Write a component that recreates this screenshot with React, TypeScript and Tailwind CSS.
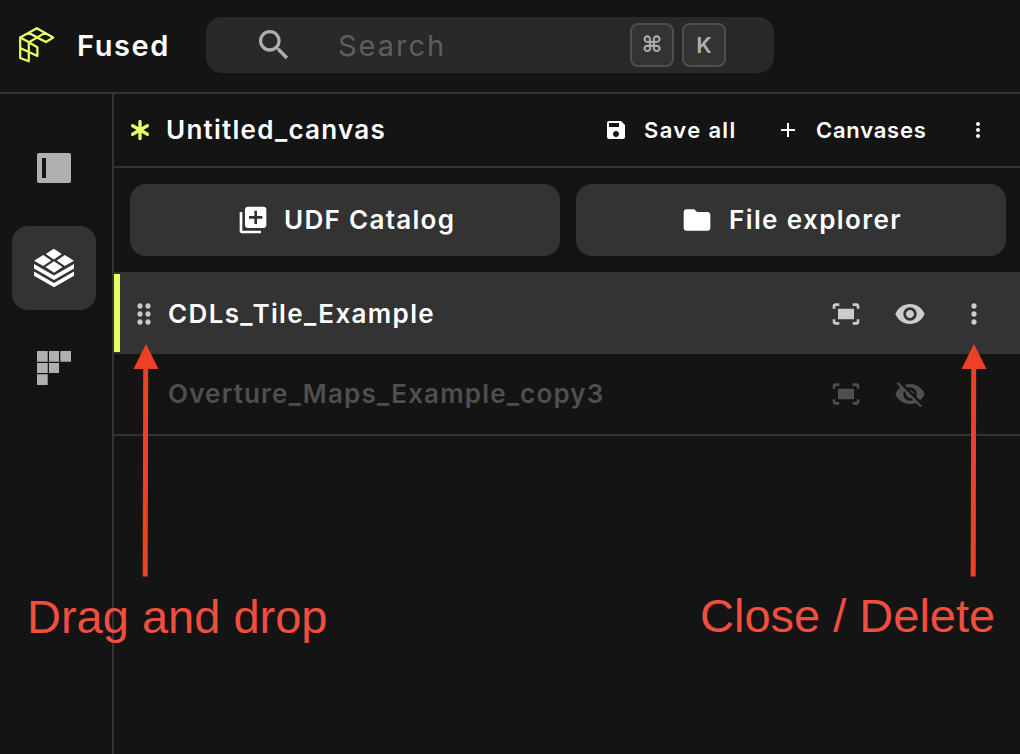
import React from "react";
import { MdSearch, MdSave, MdAdd, MdMoreVert, MdDragIndicator, MdVisibility, MdVisibilityOff, MdFitScreen, MdLibraryAdd, MdFolder } from "react-icons/md";

function Logo() {
  return (
    <svg width="38" height="36" viewBox="18 27 38 36" fill="none" stroke="#e8ff66" strokeWidth="2.2" strokeLinejoin="round" strokeLinecap="round">
      <path d="M20.200 37.500 36.800 28.200 53.200 37.500 46 42 28.500 32.800M20.200 37.500 29 42.300 45 32.900M36.800 37.500 46 42" />
      <path d="M20.200 37.500V58L28.800 61.300V42.300L37.400 47.200V56L20.200 48" />
    </svg>
  );
}

function Layers() {
  return (
    <svg width="42" height="40" viewBox="33 248 42 40" fill="#fff">
      <path d="M53.800 248.800 61.800 254 53.800 259.400 45.800 254ZM43.200 255 51.200 260.400 43.200 266 34 260.800ZM64.800 255 74 260.800 64.800 266 56.800 260.400ZM54 261.300 62.500 267 54 272.800 45.500 267Z" />
      <path d="M34 264 54 275.500 74 264V268.500L54 280 34 268.500ZM34 271.500 54 283 74 271.500V275.800L54 287.200 34 275.800Z" />
    </svg>
  );
}

function Arrow() {
  return (
    <svg width="26" height="234" viewBox="0 0 26 234" fill="#ed4127">
      <path d="M13 0 25.500 25H15.200L14.700 232.500H9.700L10.200 25H.500Z" />
    </svg>
  );
}

export default function App() {
  return (
    <div className="relative flex h-[754px] w-[1020px] flex-col overflow-hidden bg-[#141414] font-['Inter',sans-serif] text-white">
      <header className="flex h-[94px] shrink-0 items-start border-b-2 border-[#333]">
        <div className="flex h-[90px] w-[206px] items-center pl-[18px]">
          <Logo />
          <span className="ml-[21px] text-[29px] font-semibold leading-none tracking-[1.6px]">Fused</span>
        </div>
        <div className="mt-[17px] flex h-14 w-[568px] items-center rounded-2xl bg-[#292929] pl-12">
          <MdSearch size={40} className="text-[#afafaf]" />
          <span className="ml-[44px] flex-1 text-[29px] leading-none tracking-[2px] text-[#5e5e5e]">Search</span>
          <div className="mr-12 flex gap-2 text-[#afafaf]">
            <kbd className="flex size-11 items-center justify-center rounded-lg border-2 border-[#4f4f4f] bg-[#333] font-['DejaVu_Sans',sans-serif] text-[22px] font-bold leading-none">⌘</kbd>
            <kbd className="flex size-11 items-center justify-center rounded-lg border-2 border-[#4f4f4f] bg-[#333] font-['Inter',sans-serif] text-[22px] font-semibold leading-none">K</kbd>
          </div>
        </div>
      </header>
      <div className="flex min-h-0 flex-1">
        <nav className="flex w-[114px] shrink-0 flex-col items-center border-r-2 border-[#333] pr-1 pt-[58px]">
          <svg width="34" height="32" viewBox="0 0 34 32">
            <rect y="1" width="34" height="30" rx="2" fill="#b0b0b0" />
            <path d="M5 6h4v20H5z" fill="#141414" />
          </svg>
          <div className="mt-[42px] flex size-[84px] items-center justify-center rounded-2xl bg-[#333]">
            <Layers />
          </div>
          <svg className="mt-[41px]" width="34" height="34" viewBox="0 0 34 34" fill="#b0b0b0">
            <path d="M0 0h10.700v10.700H0zM12 0h10v10.700H12zM23.300 0H34v10.700H23.300zM0 12h10.700v10H0zM12 12h10v10H12zM0 23.300h10.700V34H0z" />
          </svg>
        </nav>
        <main className="min-w-0 flex-1">
          <div className="flex h-[74px] items-center border-b-2 border-[#333] pl-4">
            <svg width="20" height="22" viewBox="0 0 20 22" stroke="#e8ff66" strokeWidth="3.3" strokeLinecap="round">
              <path d="M10 2.500v17M2.600 6.700l14.800 8.600M2.600 15.300 17.400 6.700" />
            </svg>
            <span className="ml-4 text-[26px] font-semibold leading-none tracking-[1.25px]">Untitled_canvas</span>
            <div className="ml-auto flex items-center text-[22px] font-semibold leading-none">
              <MdSave size={24} />
              <span className="ml-4 w-[132px] tracking-[1.35px]">Save all</span>
              <MdAdd size={24} />
              <span className="ml-4 w-[150px] tracking-[0.75px]">Canvases</span>
              <MdMoreVert size={24} className="mr-[30px]" />
            </div>
          </div>
          <div className="flex gap-4 py-4 pl-4 text-[26px] font-semibold leading-none">
            <button className="flex h-[72px] w-[430px] items-center rounded-2xl bg-[#333] pl-[107px]">
              <MdLibraryAdd size={32} /><span className="ml-[15px] tracking-[1.3px]">UDF Catalog</span>
            </button>
            <button className="flex h-[72px] w-[430px] items-center rounded-2xl bg-[#333] pl-[105px]">
              <MdFolder size={32} /><span className="ml-4 tracking-[1.4px]">File explorer</span>
            </button>
          </div>
          <div className="flex h-[82px] items-center border-y-2 border-[#333] bg-[#333]">
            <div className="h-full w-1.5 bg-[#e8ff66]" />
            <MdDragIndicator size={32} className="ml-2 mt-0.5 text-[#c9c9c9]" />
            <span className="ml-2 mt-0.5 flex-1 text-[26px] font-semibold leading-none tracking-[1.35px]">CDLs_Tile_Example</span>
            <div className="mt-0.5 flex gap-8 pr-[30px] text-[#cccccc]">
              <MdFitScreen size={32} /><MdVisibility size={32} /><MdMoreVert size={32} />
            </div>
          </div>
          <div className="flex h-[82px] items-center border-b-2 border-[#333] pl-[54px] text-[#4f4f4f]">
            <span className="flex-1 text-[26px] font-semibold leading-none tracking-[1.18px]">Overture_Maps_Example_copy3</span>
            <div className="flex gap-8 pr-[30px]">
              <MdFitScreen size={32} /><MdVisibilityOff size={32} /><MdMoreVert size={32} className="text-[#292929]" />
            </div>
          </div>
        </main>
      </div>
      <div className="absolute left-[133px] top-[344px]"><Arrow /></div>
      <div className="absolute left-[961px] top-[344px]"><Arrow /></div>
      <div className="absolute left-[27px] top-[593px] whitespace-nowrap font-['Liberation_Sans',sans-serif] text-[47px] leading-none text-[#f04e3e]">Drag and drop</div>
      <div className="absolute left-[700px] top-[592px] whitespace-nowrap font-['Liberation_Sans',sans-serif] text-[47px] leading-none text-[#f04e3e]">Close / Delete</div>
    </div>
  );
}
